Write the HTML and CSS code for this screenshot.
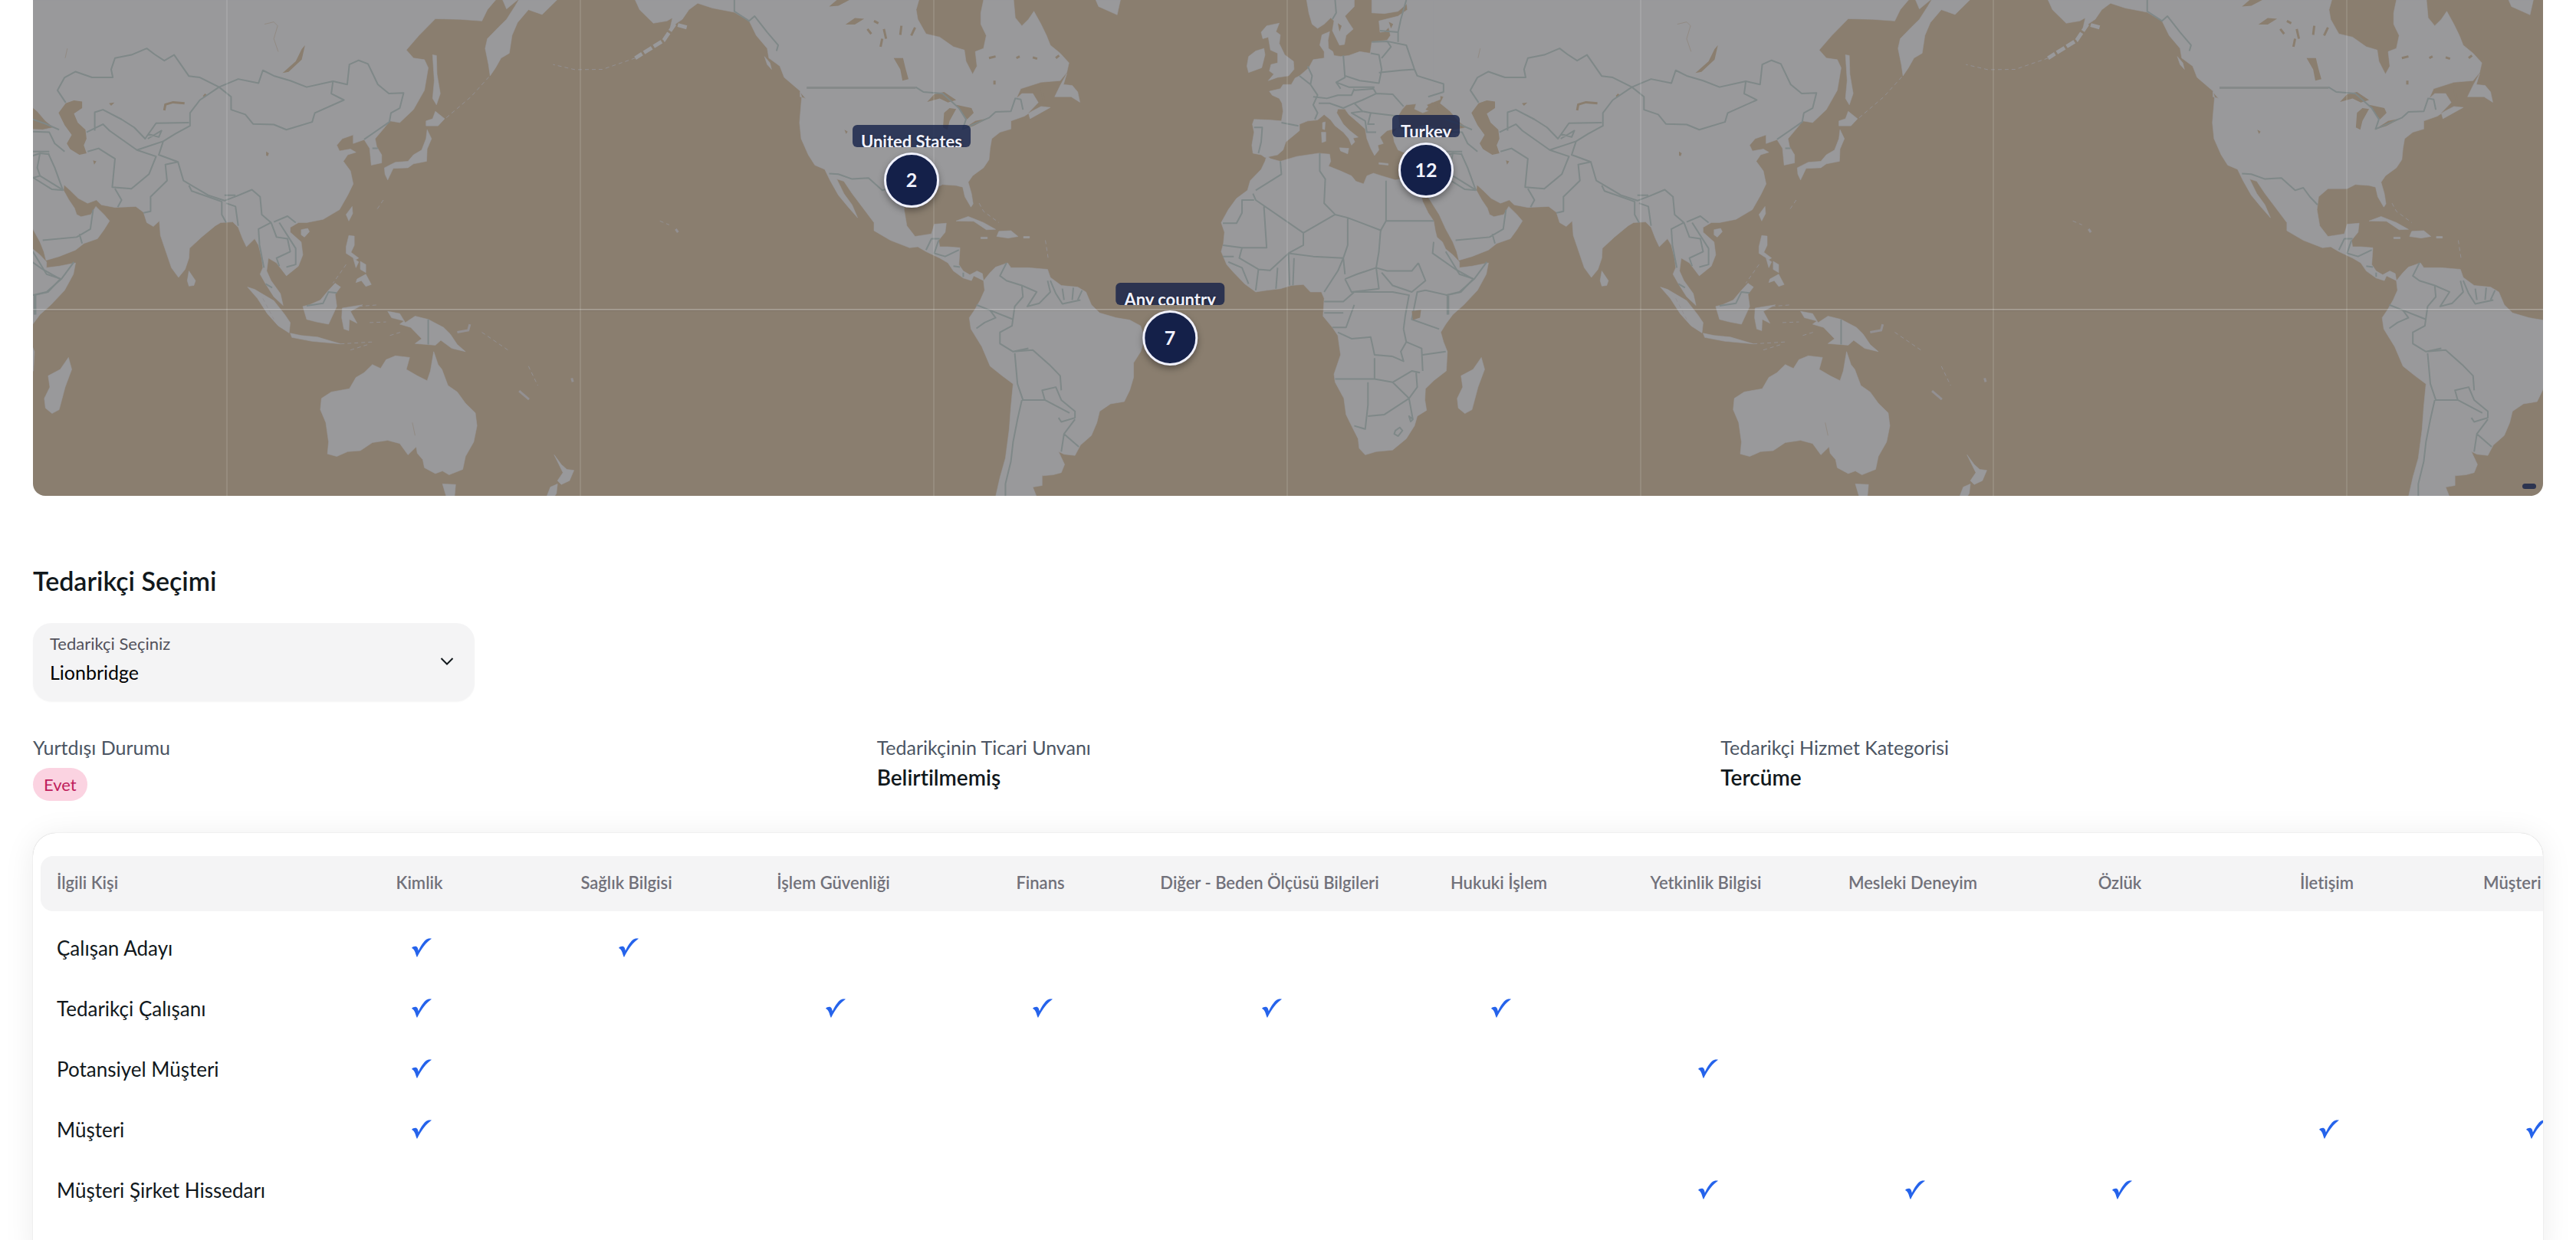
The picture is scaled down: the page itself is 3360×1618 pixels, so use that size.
FILE: index.html
```
<!DOCTYPE html>
<html lang="tr">
<head>
  <meta charset="UTF-8">
  <meta name="viewport" content="width=device-width, initial-scale=1.0">
  <title>Tedarikçi Seçimi</title>
  <link rel="stylesheet" href="styles.css">
</head>
<body>
  <main class="page">
    <section class="map">
      <svg class="map-canvas" viewBox="43 0 3274 647" aria-hidden="true">
        <defs>
          <!-- one full turn of the world, repeated left and right below -->
          <g id="world">
            <!-- Africa -->
            <path class="land" d="M745,483L752,492 770,500 800,485 840,475 860,478 862,500 858,515 880,530 900,545 908,562 922,570 928,545 940,537 955,545 980,558 1000,552 1020,560 1026,600 1030,625 1040,660 1050,685 1053,715 1056,735 1066,750 1072,772 1085,790 1097,812 1097,830 1120,825 1150,815 1146,850 1130,900 1105,945 1085,975 1072,1005 1063,1030 1068,1060 1075,1090 1073,1150 1050,1180 1035,1205 1034,1240 1037,1272 1020,1290 1015,1320 1000,1360 975,1395 945,1400 925,1410 914,1390 912,1360 900,1320 890,1285 886,1235 870,1185 868,1160 880,1100 875,1040 865,1015 848,980 850,925 845,905 825,905 812,882 790,885 770,895 745,900 725,905 705,880 685,845 672,820 662,780 666,755 668,720 662,690 675,650 690,615 710,590 715,560 735,525 742,500Z"/>
            <path class="land" d="M1137,1108L1143,1145 1131,1200 1120,1270 1107,1282 1095,1265 1093,1235 1103,1200 1100,1165 1122,1145Z"/>
            <!-- Europe -->
            <path class="land" d="M1062,0L1000,0 1002,30 985,50 950,65 952,100 960,98 968,85 971,110 965,125 937,130 934,165 915,160 895,172 880,175 868,172 866,160 858,150 857,125 860,98 846,108 842,140 850,160 850,180 830,185 822,210 805,235 797,242 790,262 775,262 770,275 750,283 755,295 768,305 773,320 775,345 772,375 750,372 722,370 719,385 722,410 718,450 720,475 735,480 742,488 765,480 775,465 780,440 805,405 805,385 820,375 838,372 850,355 862,372 870,390 885,410 895,430 900,450 906,440 903,428 912,425 897,405 885,385 873,350 875,338 888,338 895,355 912,380 925,400 928,430 935,460 942,482 950,465 948,450 958,445 952,425 965,405 988,395 985,360 992,340 1000,325 1018,322 1015,338 1030,350 1045,340 1037,325 1062,308Z"/>
            <path class="land" d="M818,0L822,40 828,75 838,88 850,75 862,55 868,65 865,95 878,140 887,138 890,110 903,90 895,70 888,50 905,20 905,0ZM937,0L937,40 960,42 985,35 1002,10 1002,0Z"/>
            <path class="land" d="M745,80L768,72 762,98 770,108 768,135 778,170 794,190 795,215 785,235 765,240 748,250 758,230 750,220 753,200 765,195 765,165 752,155 748,115 738,120 735,100ZM725,158L740,150 742,170 736,210 712,225 709,205 712,175Z"/>
            <path class="land" d="M878,458L895,460 893,477 880,468ZM845,410L853,410 853,438 846,442ZM847,380L852,378 851,402 847,400ZM950,504L967,507 967,512 950,509Z"/>
            <path class="water" d="M1035,340L1047,318 1056,322 1060,345 1050,350ZM875,72L882,80 878,98ZM968,68L976,75 972,88Z"/>
            <!-- Asia and the islands down to Australia -->
            <g transform="translate(1012 0)">
              <path class="land" d="M38,0V290L56,300 50,320 68,345 83,375 98,395 78,402 48,400 23,388 -2,400 -27,396 -37,412 -34,440 -27,465 -12,476 3,470 23,480 38,482 33,500 28,530 20,560 12,568 20,590 33,625 48,665 60,710 73,750 80,780 84,807 108,795 138,775 153,755 178,740 190,712 200,685 190,665 175,640 166,665 148,672 140,665 136,645 126,620 116,590 117,573 128,590 143,615 160,630 176,620 185,635 210,643 248,640 262,658 268,690 280,702 291,685 293,730 303,780 313,830 326,860 338,835 345,800 346,770 368,735 393,700 403,690 425,688 435,705 443,740 450,765 465,740 472,760 478,800 480,830 475,850 485,880 500,920 517,947 512,910 495,870 487,840 490,800 505,815 523,855 545,825 553,790 550,750 530,720 530,705 545,690 560,690 590,680 620,650 635,605 645,570 640,530 627,500 635,480 650,472 640,462 620,468 615,450 625,430 645,418 645,445 665,433 675,460 678,512 697,505 697,480 688,455 685,430 700,400 712,375 730,380 755,340 775,280 782,210 775,185 755,180 742,155 765,110 795,58 840,60 880,65 890,30 905,0ZM918,0H945L925,28ZM1017,0L990,45 965,30 945,70 935,110 930,165 915,180 905,210 895,235 892,200 886,150 890,120 910,85 925,60 940,20 947,0Z"/>
              <path class="land" d="M790,170L797,172 798,230 804,290 797,325 790,305 793,250ZM795,345L812,368 800,390 778,390 778,375 790,368ZM780,402L788,430 780,462 779,500 755,508 745,520 718,522 708,558 703,540 702,520 722,503 745,500 755,480 770,465 778,430ZM643,640L644,662 637,685 632,665ZM550,712L562,708 565,718 556,735 550,728ZM345,840L357,870 354,885 345,887 342,870Z"/>
              <path class="land" d="M637,730L647,732 647,760 641,782 655,800 650,805 632,785 632,765ZM645,800L655,812 650,830ZM658,810L668,820 668,845 658,835ZM668,850L678,882 668,888 660,870 650,876 652,865ZM553,950L565,945 585,930 600,900 612,878 622,890 612,912 615,950 600,1005 578,998 560,990ZM452,890L465,897 500,932 520,975 530,1000 528,1032 508,1010 488,972 470,925ZM530,1033L550,1040 580,1045 622,1066 570,1058 533,1046ZM625,955L662,945 640,965 652,1002 638,990 637,1025 628,1020 624,985ZM708,965L730,972 740,1000 758,980 782,990 810,1015 822,1035 835,1068 850,1090 825,1080 805,1055 795,1070 758,1065 770,1050 750,1015 730,1005 738,995 715,985Z"/>
              <path class="land" d="M792,1090L800,1130 807,1145 818,1195 835,1215 850,1250 868,1280 871,1320 865,1370 850,1415 845,1455 820,1472 808,1460 795,1468 775,1450 772,1425 762,1405 760,1385 745,1410 730,1375 708,1365 680,1372 658,1397 635,1400 615,1415 598,1407 600,1370 595,1310 585,1270 587,1235 605,1215 638,1205 650,1170 665,1155 680,1130 695,1142 705,1115 722,1103 748,1108 742,1145 762,1165 780,1180 786,1150ZM808,1500L832,1502 830,1540H815ZM1012,1410L1025,1440 1035,1455 1048,1458 1040,1490 1025,1502 1018,1490 1028,1465ZM1018,1500L1016,1530 1010,1545H997L1005,1510Z"/>
              <path class="isles" d="M815,365L860,300 893,238M632,820L608,878M622,1066L680,1060M640,1085L672,1068M712,1040L735,1028M880,1030L930,1088M965,1135L982,1195M1205,685L1222,697M655,950L690,945M675,1000L705,998M700,620L688,650M480,925L500,990"/>
              <path class="isles solid" d="M835,1030L855,1024 858,1005M948,1212L966,1238M1044,1172L1046,1184M1234,710L1238,720"/>
              <path class="isles wide" d="M1254,85L1232,75 1212,125 1160,180"/>
              <path class="isles" d="M1160,180L1100,215 1050,216 1010,200"/>
              <path class="water" d="M120,320L135,311 150,315 150,335 135,352 142,380 156,402 158,430 153,450 158,475 145,480 128,462 122,445 131,418 118,388 107,350ZM557,140L551,185 527,223 516,226 540,190 551,152ZM486,470L491,475 489,484 486,482ZM199,320L209,318 203,328ZM170,497L176,500 172,510Z"/>
              <path class="water-line" d="M300,342L302,324 316,317 337,320M372,300L376,292"/>
              <path class="water-line thin" d="M123,150L119,180M483,75L500,68 507,80 500,120 508,160M753,1310L758,1350"/>
              <path class="border" d="M120,318L105,280 118,240 138,222 168,240 206,240 203,215 210,180 240,170 268,150 282,168 300,188 318,170 345,236 365,240 400,270 435,245 472,258 480,218 500,235 530,250 560,270 608,252 634,262 638,200 655,187 672,198 690,262 710,290 737,288 730,335 714,350 711,378 688,405 665,432M400,270L365,310 347,350 347,390 320,415 298,438 290,480 325,502 335,560 380,605 410,622 432,608 460,588 475,610 478,665 495,690M400,270L422,300 422,340 448,355 462,384 500,386 523,402 570,378 575,350 628,310 605,290 608,252M173,405V348L188,340 222,370 245,395 265,430 285,382 345,380M270,430L295,405 290,425 270,415M158,410L188,385 200,405 250,465M160,470L180,460 210,492 205,580 240,585 272,540 285,485 250,465 298,438M210,585L222,620 215,642M325,502L302,510 305,560 275,610 275,655 262,660M345,575L350,592 405,625 405,665 413,690M410,605H430M413,630L430,640 435,700M60,370L85,385 108,402M60,408L90,410 100,445 118,470M60,470H90M88,475L100,520 115,590M60,550L95,587 115,590M78,745L140,735 165,710 170,650M145,725L150,755M60,780L85,850 112,865M112,865L135,812M112,865L85,905 60,915M65,912V975M495,690L472,710 474,760 482,830M495,690L505,735 525,740 530,780 505,800 510,825M500,688L525,670 540,690M510,690L540,770 540,820 523,828M485,880L497,892M560,948L590,940 600,905 615,908M782,990V1068M690,460L680,460"/>
            </g>
            <!-- North and Central America -->
            <g transform="translate(-1012 0)">
              <path class="land" d="M604,0L612,30 637,72 662,65 672,55 668,85 690,60 702,30 718,10 745,25 785,38 812,65 825,110 845,150 848,180 868,205 876,240 905,282 908,300 904,380 907,430 920,480 932,512 950,525 960,560 975,605 992,640 1010,675 1000,635 985,600 972,555 985,562 1000,600 1020,645 1040,690 1040,715 1070,745 1105,768 1120,765 1135,780 1160,800 1175,815 1185,840 1203,862 1218,870 1222,855 1240,870 1238,848 1228,840 1215,852 1203,840 1195,820 1197,768 1175,765 1160,765 1158,745 1170,720 1172,692 1150,695 1145,725 1115,733 1100,700 1095,650 1098,610 1115,585 1150,585 1165,572 1190,575 1202,580 1206,610 1217,642 1221,632 1218,600 1212,565 1220,545 1240,520 1250,495 1252,460 1255,430 1270,410 1290,400 1290,375 1315,360 1328,345 1345,330 1362,333 1325,368 1322,350 1340,318 1330,290 1310,290 1300,305 1308,275 1345,255 1380,250 1392,225 1396,195 1380,165 1362,140 1355,110 1345,75 1332,35 1322,60 1310,80 1298,55 1295,0H1240L1235,40 1235,75 1245,110 1240,150 1225,160 1228,205 1220,230 1208,190 1205,155 1185,145 1160,115 1135,105 1120,60 1117,30 1122,0ZM840,175L850,195 853,215 845,200ZM905,285L915,305 905,300Z"/>
              <path class="land" d="M1392,228L1386,262 1402,265 1412,285 1416,317 1400,300 1370,300 1380,265ZM1190,685L1212,671 1240,690 1262,711 1245,712 1222,686ZM1268,717L1290,715 1303,733 1285,738 1264,733ZM1235,735H1247V740H1235ZM1313,733H1324V738H1313ZM1445,0H1490L1484,46 1450,20Z"/>
              <path class="water" d="M1137,316L1150,292 1168,285 1190,310 1175,318 1160,305ZM1168,350L1178,335 1190,338 1178,375 1174,402 1166,395ZM1190,325L1218,335 1222,350 1210,370 1200,350ZM1200,402L1225,375 1248,367 1222,390ZM1076,180L1093,180 1098,215 1103,245 1092,250 1088,215ZM988,76L1005,56 1022,58 1005,76ZM958,20L972,0H995L975,18ZM986,402L992,408 989,415Z"/>
              <path class="water-line" d="M1028,90L1035,105M1058,90L1062,120M1090,80L1088,108M1055,120L1052,145M1115,85L1108,110M1250,180L1262,175M1300,180L1306,175M1330,178L1338,182M1260,250V262M1040,65L1048,72M1345,265L1350,310M1372,180L1378,172"/>
              <path class="isles" d="M1232,630L1240,655 1268,690M1353,745L1358,800"/>
              <path class="border" d="M785,0V35L812,65 822,50 845,100 865,140 862,158M958,538L975,540 1000,555 1030,552 1055,590 1070,582 1082,610 1096,635M1116,270L1130,285 1165,290 1195,335 1208,370 1202,400 1250,365 1262,347 1290,345 1298,305 1308,308 1312,340M1135,775L1145,740 1160,740M1158,745L1150,785 1170,795 1195,775M1185,825L1197,828M1203,845V858"/>
              <path class="border bold" d="M917,272H1116"/>
            </g>
            <!-- South America -->
            <path class="land" d="M228,870L240,845 250,828 272,815 278,830 310,830 345,835 350,860 370,885 400,890 415,905 425,945 440,970 470,985 495,992 515,1010 522,1050 515,1090 502,1125 502,1170 495,1210 485,1245 460,1252 440,1275 435,1310 425,1350 405,1380 395,1412 375,1408 365,1400 376,1440 370,1465 355,1472 335,1475 335,1505 318,1510 325,1540H250L258,1480 268,1420 275,1330 278,1260 282,1190 262,1165 240,1135 225,1075 205,1020 202,985 212,960 222,930 230,900Z"/>
            <path class="border" d="M270,815L258,855 270,870 298,885 300,920 285,950 280,1010 258,1030 258,1065 282,1090 310,1080M298,885L325,905 308,950 330,940 350,905 345,870M350,870L360,910 372,942 405,930M372,895L375,930M392,892L390,930M408,900L400,930M215,945L240,962 250,985 230,1000 215,1018M240,962L282,990M282,1090L318,1085 348,1130 368,1165 370,1210M285,1095L290,1190 300,1240 340,1240M298,1240L290,1300 282,1370 278,1430 268,1500 268,1540M340,1240L335,1210 360,1200 370,1240 395,1275 395,1295 370,1308 365,1295M340,1240L385,1280M395,1300L375,1345 370,1400M375,1345L402,1385"/>
            <!-- African and European borders -->
            <path class="border" d="M842,475V530L852,555 850,630 870,665 893,675 955,715M963,560V685H1050M963,685L953,715 950,780 945,830M893,675V760L885,800 888,850M870,665L812,722 725,620 720,600M722,620H700V660L690,692H665M740,640L745,768H700L665,760M812,722V760L785,785 750,840M770,500L772,540 725,590M700,768L695,800 730,835 750,838M665,795H685M675,812L700,830 712,880M730,835L725,900M765,830L762,895M785,785L787,885M795,800L793,885M785,785L830,795 885,800M885,800L875,840 850,905M888,865L900,905 950,895 945,830M888,865L910,850 945,830M945,830L965,840 1010,840 1022,815M1022,815L1035,870 1010,905 975,885 955,845M1050,750L1048,785 1090,835 1122,865 1100,905 1075,915 1035,900M1075,915V975M1035,900L1020,905 1010,990 1060,1020M905,905L885,935 850,935M905,905H975L1005,915 998,980 995,1020M850,970H885M865,1015H890L905,945M875,1030L900,1050 935,1045 942,1100 975,1105M995,1020L1000,1060 1028,1080 1030,1150M1000,1060L990,1090 995,1120 975,1105M942,1110V1175H870M942,1175L975,1185 1010,1150 1025,1155M1030,1100L1072,1090M930,1185V1255L925,1330 905,1320M930,1290L960,1285 1005,1235M975,1185L1005,1235 1020,1200 1018,1155M1005,1235L1012,1300M980,1335L988,1325 993,1335 985,1352 978,1345ZM1005,1290L1012,1300 1008,1307Z"/>
            <path class="border" d="M722,395H737L735,440 730,475M772,380L803,390M805,235L825,262M820,205L828,235 825,262 838,295 830,325 838,350 833,370M885,172L888,240 872,255 880,275M888,235L915,250 950,258 955,215 950,170 935,165M872,255L895,270 942,270M830,300L855,305 875,295 900,295 905,275M840,320H860L885,335 905,320 920,310M905,280L940,275 945,290 920,310M870,0L872,40 865,60M905,320L920,345 935,350 930,385 942,385M920,345L900,350 925,375 928,410 945,410M945,290L975,292 995,330M935,350L985,360M950,225L990,218 1015,215 1020,235 1068,260V285L1040,300M937,130L965,128 972,145 955,180M965,128L1000,140 1015,215M952,95L985,100 990,60 1000,0M985,100L985,130M1085,475L1080,520 1085,545 1128,590M1060,490L1085,475 1102,478M1055,560L1085,545"/>
            <path class="water" d="M1010,965L1027,960 1025,985 1012,992Z"/>
          </g>
        </defs>
        <rect class="sea" x="43" width="3274" height="647"/>
        <g transform="scale(.71429 .42092) translate(1568 0)">
          <use href="#world" x="-2580"/>
          <use href="#world"/>
          <use href="#world" x="2580"/>
        </g>
        <path class="grid" d="M296,0V647M757,0V647M1218,0V647M1679,0V647M2140,0V647M2600,0V647M3061,0V647"/>
        <path class="equator" d="M43,404H3317"/>
        <path class="equator-edge" d="M43,405H3317"/>
      </svg>
      <div class="marker marker-us">
        <span class="marker-label">United States</span>
        <span class="marker-count">2</span>
      </div>
      <div class="marker marker-tr">
        <span class="marker-label">Turkey</span>
        <span class="marker-count">12</span>
      </div>
      <div class="marker marker-any">
        <span class="marker-label">Any country</span>
        <span class="marker-count">7</span>
      </div>
      <div class="attribution"></div>
    </section>

    <section class="supplier">
      <h2>Tedarikçi Seçimi</h2>
      <div class="select-box">
        <label for="supplier">Tedarikçi Seçiniz</label>
        <select id="supplier">
          <option>Lionbridge</option>
        </select>
        <svg class="chevron" viewBox="0 0 18 12" aria-hidden="true"><path d="M1.500,2L9,9.500 16.500,2"/></svg>
      </div>
      <div class="details">
        <div class="detail">
          <p class="detail-name">Yurtdışı Durumu</p>
          <span class="chip">Evet</span>
        </div>
        <div class="detail">
          <p class="detail-name">Tedarikçinin Ticari Unvanı</p>
          <p class="detail-value">Belirtilmemiş</p>
        </div>
        <div class="detail">
          <p class="detail-name">Tedarikçi Hizmet Kategorisi</p>
          <p class="detail-value">Tercüme</p>
        </div>
      </div>
    </section>

    <section class="card">
      <table>
        <colgroup>
          <col class="col-person">
          <col span="4">
          <col class="col-wide">
          <col span="6">
        </colgroup>
        <thead>
          <tr>
            <th>İlgili Kişi</th>
            <th>Kimlik</th>
            <th>Sağlık Bilgisi</th>
            <th>İşlem Güvenliği</th>
            <th>Finans</th>
            <th>Diğer - Beden Ölçüsü Bilgileri</th>
            <th>Hukuki İşlem</th>
            <th>Yetkinlik Bilgisi</th>
            <th>Mesleki Deneyim</th>
            <th>Özlük</th>
            <th>İletişim</th>
            <th>Müşteri İşlem</th>
          </tr>
        </thead>
        <tbody id="rows"></tbody>
      </table>
    </section>
  </main>

  <script>
    const columnCount = 11;
    const people = [
      { name: 'Çalışan Adayı', checks: [0, 1] },
      { name: 'Tedarikçi Çalışanı', checks: [0, 2, 3, 4, 5] },
      { name: 'Potansiyel Müşteri', checks: [0, 6] },
      { name: 'Müşteri', checks: [0, 9, 10] },
      { name: 'Müşteri Şirket Hissedarı', checks: [6, 7, 8] }
    ];
    const tick = '<svg class="tick" viewBox="0 0 26 26" role="img" aria-label="Var"><path d="M0,13C1,11.500 4,10.500 6,11 7.500,11.500 8.200,13.500 8.800,16.500 11,11.500 14.500,5.500 18.500,2.200 20.500,.6 23.500,.2 26,.8 19,5.500 12.500,14 7,25 6.400,24.500 5.500,21.500 4.500,18.500 3.500,16 2.500,14.200 0,13Z"/></svg>';

    document.getElementById('rows').innerHTML = people.map(person => {
      let cells = '';
      for (let i = 0; i < columnCount; i++) {
        cells += `<td>${person.checks.includes(i) ? tick : ''}</td>`;
      }
      return `<tr><td>${person.name}</td>${cells}</tr>`;
    }).join('');
  </script>
</body>
</html>
```
FILE: styles.css
```
* {
  box-sizing: border-box;
}
body {
  margin: 0;
  height: 100vh;
  overflow: hidden;
  background: #fff;
  color: #11181c;
  font-family: Lato, "Open Sans", sans-serif;
  font-size: 25px;
  font-variant-ligatures: none;
}
h2, p {
  margin: 0;
}
.page {
  padding: 0 43px;
}

/* map */
.map {
  position: relative;
  border-radius: 0 0 16px 16px;
  overflow: hidden;
}
.map-canvas {
  display: block;
  width: 100%;
}
.sea, .water {
  fill: #8a7e6f;
}
.land {
  fill: #99999b;
  stroke: #99999b;
  stroke-width: 1;
  stroke-linejoin: round;
}
.isles, .water-line, .border {
  fill: none;
  vector-effect: non-scaling-stroke;
}
.isles {
  stroke: #939092;
  stroke-width: 1;
  stroke-dasharray: 5 4;
}
.isles.solid {
  stroke-width: 3;
  stroke-dasharray: none;
}
.isles.wide {
  stroke: #99999b;
  stroke-width: 5;
  stroke-dasharray: 12 3;
}
.water-line {
  stroke: #8a7e6f;
  stroke-width: 3;
}
.water-line.thin {
  stroke: #928b84;
  stroke-width: 1;
}
.border {
  stroke: #7f8888;
  stroke-width: 2;
  stroke-linejoin: round;
}
.border.bold {
  stroke: #858989;
  stroke-width: 3;
}
.grid {
  fill: none;
  stroke: rgba(255, 255, 255, 0.22);
}
.equator {
  stroke: rgba(255, 255, 255, 0.25);
  stroke-width: 2;
}
.equator-edge {
  stroke: rgba(0, 0, 0, 0.12);
}

.marker {
  position: absolute;
  display: flex;
  flex-direction: column;
  align-items: center;
  gap: 7px;
  transform: translateX(-50%);
  color: #f1f2ff;
}
.marker-us {
  left: 35%;
  top: 25.2%;
}
.marker-tr {
  left: 55.5%;
  top: 23.2%;
}
.marker-any {
  left: 45.3%;
  top: 57%;
}
.marker-label {
  height: 29px;
  padding: 8px 11px;
  border-radius: 6px;
  background: rgba(20, 32, 73, 0.8);
  overflow: hidden;
  white-space: nowrap;
  font-size: 22px;
  font-weight: 700;
  line-height: 28px;
  text-shadow: 0 1px 3px rgba(0, 0, 0, 0.5);
}
.marker-count {
  display: flex;
  align-items: center;
  justify-content: center;
  width: 72px;
  height: 72px;
  padding-bottom: 2px;
  border: 3px solid #f1f2ff;
  border-radius: 50%;
  background: #142049;
  box-shadow: 0 4px 8px rgba(0, 0, 0, 0.35);
  font-size: 25px;
  font-weight: 700;
}
.attribution {
  position: absolute;
  right: 9px;
  bottom: 9px;
  width: 18px;
  height: 7px;
  border-radius: 4px;
  background: #2c3450;
}

/* supplier selection */
.supplier {
  padding: 89px 0 42px;
}
h2 {
  font-size: 34px;
  font-weight: 600;
  line-height: 44px;
}
.select-box {
  position: relative;
  max-width: 576px;
  margin-top: 33px;
  border-radius: 24px;
  background: #f4f4f5;
  box-shadow: 0 1px 2px rgba(0, 0, 0, 0.04);
}
.select-box label {
  position: absolute;
  top: 13px;
  left: 22px;
  color: #52525b;
  font-size: 22px;
  line-height: 28px;
}
.select-box select {
  display: block;
  width: 100%;
  height: 102px;
  padding: 48px 22px 22px;
  border: 0;
  background: none;
  appearance: none;
  color: #000;
  font: inherit;
  line-height: 32px;
}
.chevron {
  position: absolute;
  top: 44px;
  right: 27px;
  width: 18px;
  height: 12px;
  pointer-events: none;
}
.chevron path {
  fill: none;
  stroke: #11181c;
  stroke-width: 2;
}
.details {
  display: grid;
  grid-template-columns: repeat(3, 1fr);
  gap: 28px;
  margin-top: 42px;
}
.detail-name {
  color: #4b5563;
  line-height: 36px;
}
.detail-value {
  margin-top: 3px;
  font-size: 28px;
  font-weight: 600;
  line-height: 36px;
}
.chip {
  display: inline-block;
  margin-top: 9px;
  padding: 0 14px;
  border-radius: 22px;
  background: #fbd3e1;
  color: #bf1d5b;
  font-size: 22px;
  line-height: 43px;
}

/* data table */
.card {
  padding: 30px 0 60px 10px;
  border-radius: 30px;
  background: #fff;
  box-shadow: 0 0 1px rgba(0, 0, 0, 0.3), 0 4px 40px rgba(0, 0, 0, 0.08);
  overflow: hidden;
}
table {
  table-layout: fixed;
  width: 3387px;
  border-spacing: 0;
}
.col-person {
  width: 359px;
}
.col-wide {
  width: 328px;
}
th, td {
  padding: 0 21px;
  text-align: center;
  white-space: nowrap;
}
th:first-child, td:first-child {
  text-align: left;
}
th {
  height: 72px;
  padding-bottom: 3px;
  background: #f4f4f5;
  color: #71717a;
  font-size: 22px;
  font-weight: 600;
}
th:first-child {
  border-radius: 16px 0 0 16px;
}
tbody::before {
  content: "";
  display: block;
  height: 8px;
}
td {
  height: 79px;
  font-size: 26px;
}
.tick {
  display: inline-block;
  width: 26px;
  height: 26px;
  margin: 0 0 4px 5px;
  vertical-align: middle;
  fill: #2563eb;
}
```
